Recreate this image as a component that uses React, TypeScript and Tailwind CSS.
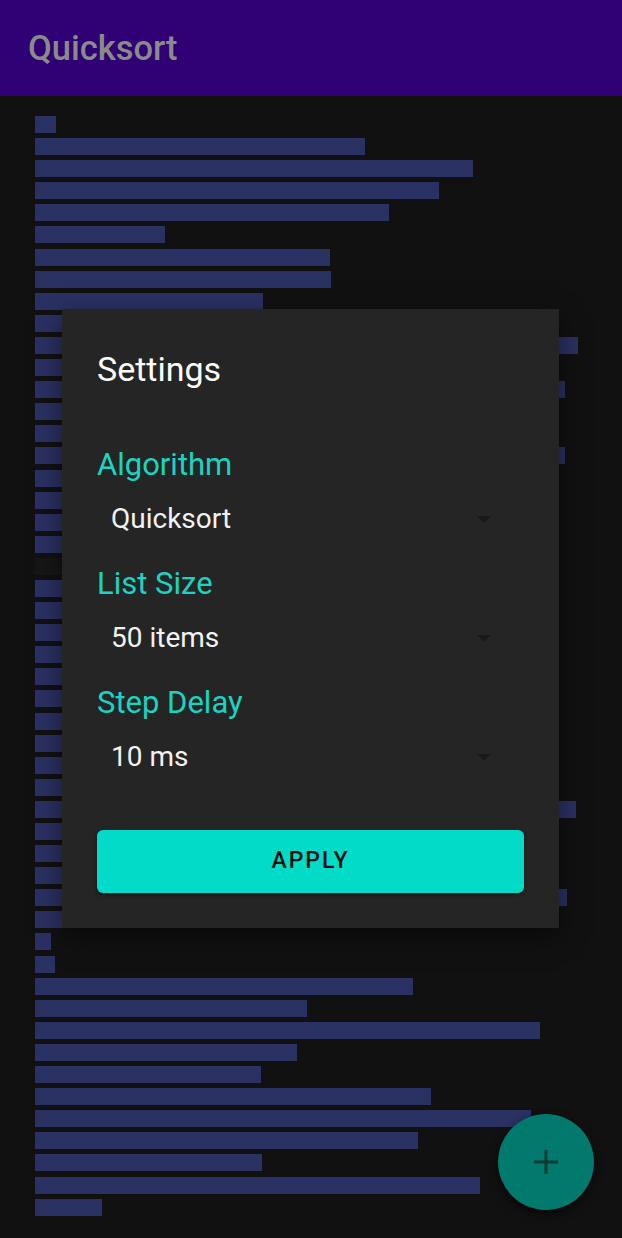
const BAR_WIDTHS = [
  21, 330, 438, 404, 354, 130, 295, 296, 228, 300,
  543, 210, 530, 250, 380, 530, 310, 180, 420, 260,
  0, 350, 140, 460, 290, 90, 400, 330, 220, 470,
  160, 541, 370, 240, 450, 532, 48, 16, 20, 378,
  272, 505, 262, 226, 396, 496, 383, 227, 445, 67,
];

// the empty slot at index 20 shows as a dark pivot cell
const PIVOT = 20;

function Caret() {
  return (
    <svg width="16" height="9" viewBox="0 0 16 9" className="shrink-0">
      <polygon points="1,1 15,1 8,8" fill="#191919" />
    </svg>
  );
}

function SettingRow({ label, value }: { label: string; value: string }) {
  return (
    <div className="flex flex-col">
      <div className="h-[36px] leading-[36px] text-[31px] text-[#1ad4c1]">{label}</div>
      <div className="mt-[8px] h-[56px] flex items-center justify-between pl-[14px] pr-[32px]">
        <span className="text-[28px] text-[#f2f2f2]">{value}</span>
        <Caret />
      </div>
    </div>
  );
}

export default function App() {
  return (
    <div
      className="relative w-[622px] h-[1238px] overflow-hidden bg-[#111111]"
      style={{ fontFamily: 'Roboto, "Noto Sans", sans-serif' }}
    >
      <header className="h-[96px] bg-[#300075] flex items-center pl-[28px]">
        <h1 className="text-[34.5px] font-medium text-[#8a8a8a] leading-none">Quicksort</h1>
      </header>

      <main className="pt-[20px] pl-[35px] flex flex-col gap-[5.1px]">
        {BAR_WIDTHS.map((w, i) => (
          <div
            key={i}
            className={`h-[17px] ${i === PIVOT ? 'bg-[#161616]' : 'bg-[#2a3163]'}`}
            style={{ width: i === PIVOT ? 27 : w }}
          />
        ))}
      </main>

      <button className="absolute left-[498px] top-[1114px] w-[96px] h-[96px] rounded-full bg-[#01796c] shadow-[0_4px_10px_rgba(0,0,0,0.6)] flex items-center justify-center">
        <svg width="26" height="26" viewBox="0 0 26 26">
          <path d="M13 1v24M1 13h24" stroke="#0c3a35" strokeWidth="3" />
        </svg>
      </button>

      <div className="absolute left-[62px] top-[309px] w-[497px] h-[619px] bg-[#252525] shadow-[0_8px_24px_rgba(0,0,0,0.5)] pt-[40px] px-[35px] flex flex-col">
        <h2 className="h-[40px] leading-[40px] text-[34px] text-white">Settings</h2>
        <div className="mt-[58px] flex flex-col gap-[19px]">
          <SettingRow label="Algorithm" value="Quicksort" />
          <SettingRow label="List Size" value="50 items" />
          <SettingRow label="Step Delay" value="10 ms" />
        </div>
        <button className="mt-[45px] h-[63px] w-full rounded-[6px] bg-[#02dbc7] shadow-[0_2px_4px_rgba(0,0,0,0.4)] text-[23px] font-medium tracking-[2px] text-[#111]">
          APPLY
        </button>
      </div>
    </div>
  );
}
